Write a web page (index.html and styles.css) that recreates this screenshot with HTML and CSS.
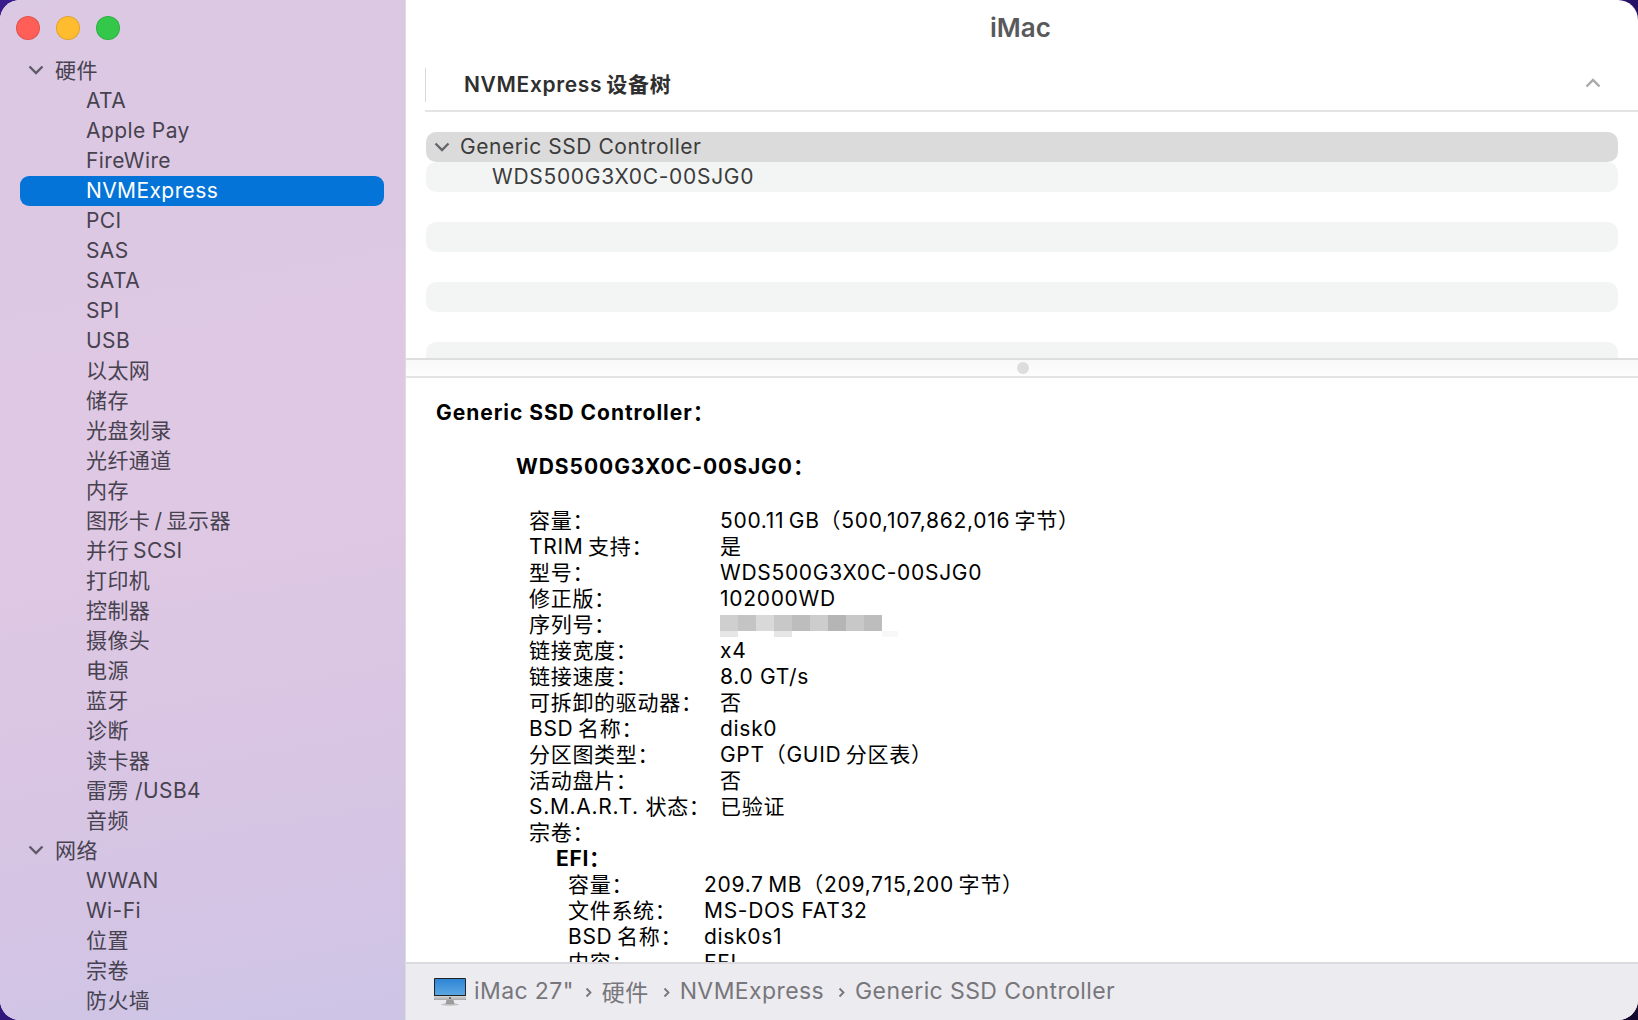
FILE: index.html
```html
<!DOCTYPE html>
<html lang="zh-CN">
  <head>
    <meta charset="UTF-8" />
    <title>iMac</title>
    <link rel="stylesheet" href="styles.css">
  </head>
  <body>
    <div class="window">
      <aside class="sidebar">
        <div class="lights">
          <span class="light red"></span>
          <span class="light yellow"></span>
          <span class="light green"></span>
        </div>
        <div class="group"><svg class="chev" viewBox="0 0 16 10"><path d="M1.500 1.500 8 8l6.500-6.500" /></svg>硬件</div>
        <div class="item">ATA</div>
        <div class="item">Apple Pay</div>
        <div class="item">FireWire</div>
        <div class="item selected">NVMExpress</div>
        <div class="item">PCI</div>
        <div class="item">SAS</div>
        <div class="item">SATA</div>
        <div class="item">SPI</div>
        <div class="item">USB</div>
        <div class="item">以太网</div>
        <div class="item">储存</div>
        <div class="item">光盘刻录</div>
        <div class="item">光纤通道</div>
        <div class="item">内存</div>
        <div class="item">图形卡&thinsp;/&thinsp;显示器</div>
        <div class="item">并行&thinsp;SCSI</div>
        <div class="item">打印机</div>
        <div class="item">控制器</div>
        <div class="item">摄像头</div>
        <div class="item">电源</div>
        <div class="item">蓝牙</div>
        <div class="item">诊断</div>
        <div class="item">读卡器</div>
        <div class="item">雷雳 /USB4</div>
        <div class="item">音频</div>
        <div class="group"><svg class="chev" viewBox="0 0 16 10"><path d="M1.500 1.500 8 8l6.500-6.500" /></svg>网络</div>
        <div class="item">WWAN</div>
        <div class="item">Wi-Fi</div>
        <div class="item">位置</div>
        <div class="item">宗卷</div>
        <div class="item">防火墙</div>
      </aside>

      <main class="main">
        <div class="titlebar">iMac</div>
        <div class="tree-head">
          <span class="tree-title">NVMExpress&thinsp;设备树</span>
          <svg class="collapse" viewBox="0 0 16 10"><path d="M1.500 8.500 8 2l6.500 6.500" /></svg>
        </div>
        <div class="tree">
          <div class="tree-row active"><svg class="chev" viewBox="0 0 16 10"><path d="M1.500 1.500 8 8l6.500-6.500" /></svg>Generic SSD Controller</div>
          <div class="tree-row stripe child">WDS500G3X0C-00SJG0</div>
          <div class="tree-row"></div>
          <div class="tree-row stripe"></div>
          <div class="tree-row"></div>
          <div class="tree-row stripe"></div>
          <div class="tree-row"></div>
          <div class="tree-row stripe"></div>
        </div>
        <div class="splitter"><span class="grip"></span></div>

        <div class="details">
          <h3 class="head-one">Generic SSD Controller：</h3>
          <h3 class="head-two">WDS500G3X0C-00SJG0：</h3>
          <div class="rows">
            <div class="row"><span class="key">容量：</span><span>500.11&thinsp;GB（500,107,862,016&thinsp;字节）</span></div>
            <div class="row"><span class="key">TRIM&thinsp;支持：</span><span>是</span></div>
            <div class="row"><span class="key">型号：</span><span>WDS500G3X0C-00SJG0</span></div>
            <div class="row"><span class="key">修正版：</span><span>102000WD</span></div>
            <div class="row"><span class="key">序列号：</span>
              <div class="serial"><div class="serial-top"></div><div class="serial-low"></div></div>
            </div>
            <div class="row"><span class="key">链接宽度：</span><span>x4</span></div>
            <div class="row"><span class="key">链接速度：</span><span>8.0 GT/s</span></div>
            <div class="row"><span class="key">可拆卸的驱动器：</span><span>否</span></div>
            <div class="row"><span class="key">BSD&thinsp;名称：</span><span>disk0</span></div>
            <div class="row"><span class="key">分区图类型：</span><span>GPT（GUID&thinsp;分区表）</span></div>
            <div class="row"><span class="key">活动盘片：</span><span>否</span></div>
            <div class="row"><span class="key">S.M.A.R.T. 状态：</span><span>已验证</span></div>
            <div class="row"><span class="key">宗卷：</span></div>
          </div>
          <div class="volume">
            <div class="volume-name">EFI：</div>
            <div class="row sub"><span class="key">容量：</span><span>209.7&thinsp;MB（209,715,200&thinsp;字节）</span></div>
            <div class="row sub"><span class="key">文件系统：</span><span>MS-DOS FAT32</span></div>
            <div class="row sub"><span class="key">BSD&thinsp;名称：</span><span>disk0s1</span></div>
            <div class="row sub"><span class="key">内容：</span><span>EFI</span></div>
          </div>
        </div>

        <footer class="pathbar">
          <svg class="imac" viewBox="0 0 32 28">
            <defs>
              <linearGradient id="screen" x1="0" y1="0" x2="0" y2="1">
                <stop offset="0" stop-color="#2f86d6" />
                <stop offset="1" stop-color="#5aa6e2" />
              </linearGradient>
              <linearGradient id="chin" x1="0" y1="0" x2="0" y2="1">
                <stop offset="0" stop-color="#d6d6d6" />
                <stop offset="1" stop-color="#a9a9a9" />
              </linearGradient>
            </defs>
            <path d="M12.500 22h7l1 4h-9z" fill="#9c9c9c" />
            <ellipse cx="16" cy="26.500" rx="9" ry="1.200" fill="#8f8f8f" opacity="0.5" />
            <rect x="0" y="0" width="32" height="22" rx="1" fill="#222" />
            <rect x="1" y="1" width="30" height="16" fill="url(#screen)" />
            <path d="M0 18h32v3a1 1 0 0 1-1 1H1a1 1 0 0 1-1-1z" fill="url(#chin)" />
            <circle cx="16" cy="20" r="1" fill="#555" />
          </svg>
          <span class="crumb">iMac 27"</span>
          <svg class="sep" viewBox="0 0 7 11"><path d="M1.500 1.500 5.500 5.500l-4 4" /></svg>
          <span class="crumb">硬件</span>
          <svg class="sep wide" viewBox="0 0 7 11"><path d="M1.500 1.500 5.500 5.500l-4 4" /></svg>
          <span class="crumb">NVMExpress</span>
          <svg class="sep wide" viewBox="0 0 7 11"><path d="M1.500 1.500 5.500 5.500l-4 4" /></svg>
          <span class="crumb">Generic SSD Controller</span>
        </footer>
      </main>
    </div>
  </body>
</html>
```

FILE: styles.css
```css
* {
  box-sizing: border-box;
}

html,
body {
  margin: 0;
  height: 100%;
}

body {
  background: linear-gradient(135deg, #3a1c8c 0%, #2a1478 50%, #14082e 100%);
  font-family: Inter, "Noto Sans CJK SC", sans-serif;
  overflow: hidden;
}

.window {
  display: flex;
  width: 1638px;
  height: 1020px;
  border-radius: 20px;
  overflow: hidden;
  background: #fff;
}

/* sidebar */
.sidebar {
  width: 405px;
  flex-shrink: 0;
  background: linear-gradient(170deg, #dbc8e3 0%, #dfc8e3 50%, #d5c4e4 85%, #cdc5e6 100%);
  color: #47424f;
  font-size: 21px;
  letter-spacing: 0.4px;
}

.lights {
  display: flex;
  gap: 16px;
  height: 55px;
  padding: 16px 0 0 16px;
}

.light {
  width: 24px;
  height: 24px;
  border-radius: 50%;
  border: 1px solid rgba(0, 0, 0, 0.12);
}
.red {
  background: #ff5f57;
}
.yellow {
  background: #febc2e;
}
.green {
  background: #34c84a;
}

.group {
  display: flex;
  align-items: center;
  height: 30px;
  padding: 0 0 2px 28px;
}

.chev {
  width: 16px;
  height: 10px;
  margin-right: 11px;
  fill: none;
  stroke: #5f5a68;
  stroke-width: 2.4;
}
.group .chev {
  margin-top: 2px;
}

.item {
  height: 30px;
  line-height: 32px;
  margin: 0 21px 0 20px;
  padding-left: 66px;
  border-radius: 9px;
}

.item.selected {
  margin: 1px 21px -1px 20px;
  line-height: 30px;
  background: #0474d8;
  color: #fff;
}

/* right side */
.main {
  flex: 1;
  min-width: 0;
  display: flex;
  flex-direction: column;
  border-left: 1px solid #dcdcdc;
  color: #000;
}

.titlebar {
  height: 55px;
  line-height: 56px;
  text-align: center;
  padding-right: 3px;
  font-size: 26px;
  font-weight: 600;
  color: #59595b;
}

.tree-head {
  display: flex;
  align-items: center;
  justify-content: space-between;
  height: 57px;
  margin-left: 19px;
  padding: 1px 37px 0 39px;
  border-bottom: 2px solid #e4e4e4;
  position: relative;
}

.tree-head::before {
  content: "";
  position: absolute;
  left: 0;
  top: 13px;
  bottom: 8px;
  width: 1px;
  background: #d8d8d8;
}

.tree-title {
  font-size: 21px;
  font-weight: 600;
  letter-spacing: 0.65px;
  color: #2f2f2f;
}

.collapse {
  width: 16px;
  height: 10px;
  fill: none;
  stroke: #a9a9a9;
  stroke-width: 2.4;
}

.tree {
  height: 246px;
  padding: 20px 20px 0 20px;
  overflow: hidden;
  font-size: 21px;
  letter-spacing: 0.55px;
  color: #3c3c3c;
}

.tree-row {
  display: flex;
  align-items: center;
  height: 30px;
  flex-shrink: 0;
  border-radius: 10px;
  padding: 0 0 2px 8px;
}

.tree-row.active {
  background: #dbdbdb;
}
.tree-row.active .chev {
  margin: 2px 10px 0 0;
  stroke: #66666a;
}
.tree-row.stripe {
  background: #f3f5f4;
}
.tree-row.child {
  padding-left: 66px;
  letter-spacing: 0.7px;
}

.splitter {
  display: flex;
  justify-content: center;
  align-items: center;
  height: 20px;
  flex-shrink: 0;
  padding-left: 2px;
  border-top: 2px solid #dedede;
  border-bottom: 2px solid #e4e4e4;
  background: linear-gradient(#f8f8f8, #fdfdfd);
}

.grip {
  width: 12px;
  height: 12px;
  border-radius: 50%;
  background: #dddddd;
}

.details {
  flex: 1;
  min-height: 0;
  overflow: hidden;
  padding: 22px 0 0 30px;
  font-size: 21px;
  line-height: 26px;
  letter-spacing: 0.7px;
}

.head-one,
.head-two {
  margin: 0;
  font-size: 21px;
  font-weight: 700;
  line-height: 26px;
  letter-spacing: 0.95px;
}

.head-two {
  margin-top: 28px;
  padding-left: 80px;
}

.rows {
  margin-top: 28px;
  padding-left: 93px;
}

.row {
  display: flex;
  height: 26px;
}

.key {
  width: 191px;
  flex-shrink: 0;
}

.serial {
  width: 184px;
  padding-top: 3px;
}

.serial-top {
  height: 16px;
  width: 162px;
  background: linear-gradient(
    90deg,
    #cfcfcf 0 18px,
    #c4c4c4 18px 36px,
    #d9d9d9 36px 54px,
    #c8c8c8 54px 72px,
    #bdbdbd 72px 90px,
    #cdcdcd 90px 108px,
    #b5b5b5 108px 126px,
    #c8c8c8 126px 144px,
    #bdbdbd 144px 162px
  );
}

.serial-low {
  height: 6px;
  background: linear-gradient(
    90deg,
    #e6e6e6 0 18px,
    #fff 18px 54px,
    #e6e6e6 54px 72px,
    #fff 72px 162px,
    #f8f8f8 162px 178px,
    #fff 178px
  );
}

.volume {
  padding-left: 120px;
}

.volume-name {
  font-weight: 700;
  height: 26px;
}

.row.sub {
  padding-left: 12px;
}
.row.sub .key {
  width: 136px;
}

.pathbar {
  display: flex;
  align-items: center;
  height: 58px;
  flex-shrink: 0;
  padding: 0 0 2px 28px;
  border-top: 2px solid #dcdae0;
  background: #ecebef;
  color: #77767b;
  font-size: 23px;
  letter-spacing: 0.4px;
}

.imac {
  width: 32px;
  height: 28px;
  margin: 2px 8px 0 0;
}

.sep {
  width: 7px;
  height: 11px;
  margin: 3px 10px 0 11px;
  fill: none;
  stroke: #77767b;
  stroke-width: 1.800;
}
.sep.wide {
  margin-left: 14px;
}
```
